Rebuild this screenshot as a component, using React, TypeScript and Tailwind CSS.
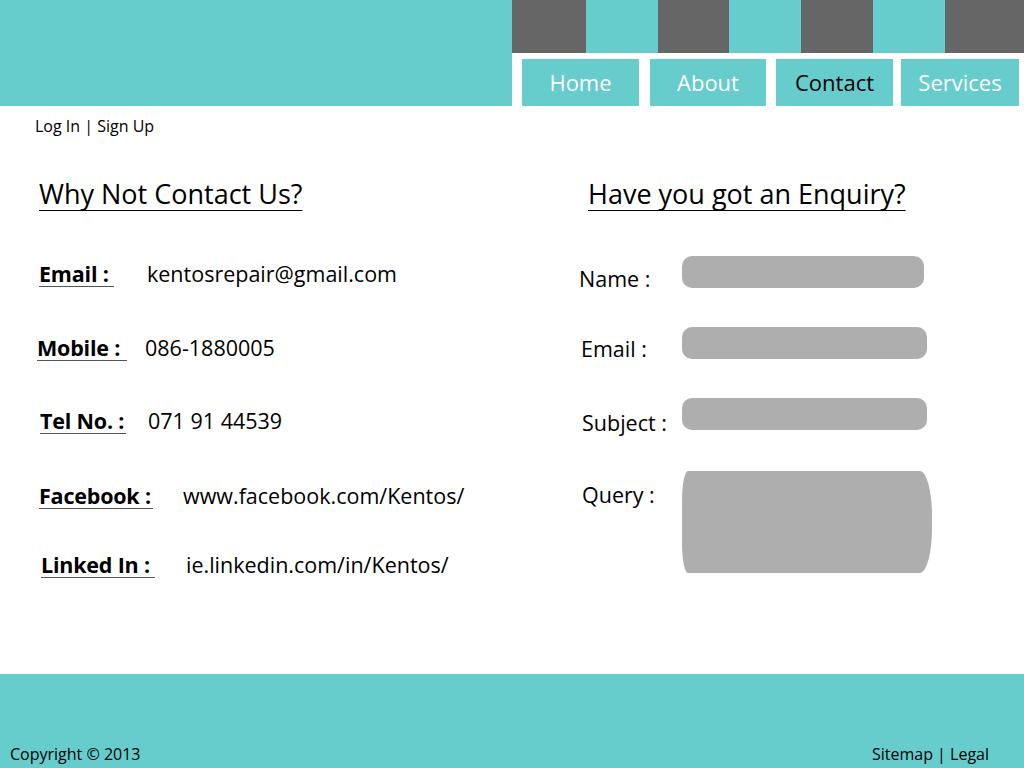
import React from "react";

const teal = "bg-[#66cccc]";

function Header() {
  const blocks = [
    { w: "w-[74px]", c: "bg-[#666666]" },
    { w: "w-[72px]", c: "bg-[#66cccc]" },
    { w: "w-[71px]", c: "bg-[#666666]" },
    { w: "w-[72px]", c: "bg-[#66cccc]" },
    { w: "w-[72px]", c: "bg-[#666666]" },
    { w: "w-[72px]", c: "bg-[#66cccc]" },
    { w: "w-[79px]", c: "bg-[#666666]" },
  ];
  return (
    <div className="flex h-[106px]">
      <div className={`w-[512px] ${teal}`} />
      <div className="flex flex-1 flex-col">
        <div className="flex h-[53px]">
          {blocks.map((b, i) => (
            <div key={i} className={`${b.w} ${b.c} h-full`} />
          ))}
        </div>
        <div className="flex flex-1 bg-white pl-[10px] pt-[6px] text-[22px]">
          <div className="flex w-[117px] items-center justify-center bg-[#66cccc] text-white">Home</div>
          <div className="ml-[11px] flex w-[116px] items-center justify-center bg-[#66cccc] text-white">About</div>
          <div className="ml-[10px] flex w-[117px] items-center justify-center bg-[#66cccc] text-black">Contact</div>
          <div className="ml-[8px] flex w-[118px] items-center justify-center bg-[#66cccc] text-white">Services</div>
        </div>
      </div>
    </div>
  );
}

type Row = { label: string; value: string; pl: string; w: string; ml: string; mt: string };

const rows: Row[] = [
  { label: "Email :", value: "kentosrepair@gmail.com", pl: "pl-[39px]", w: "w-[75px]", ml: "ml-[33px]", mt: "mt-[52px]" },
  { label: "Mobile :", value: "086-1880005", pl: "pl-[37px]", w: "w-[90px]", ml: "ml-[18px]", mt: "mt-[50px]" },
  { label: "Tel No. :", value: "071 91 44539", pl: "pl-[40px]", w: "w-[86px]", ml: "ml-[22px]", mt: "mt-[49px]" },
  { label: "Facebook :", value: "www.facebook.com/Kentos/", pl: "pl-[39px]", w: "w-[114px]", ml: "ml-[30px]", mt: "mt-[51px]" },
  { label: "Linked In :", value: "ie.linkedin.com/in/Kentos/", pl: "pl-[41px]", w: "w-[114px]", ml: "ml-[31px]", mt: "mt-[45px]" },
];

function LeftColumn() {
  return (
    <div className="flex w-[579px] flex-col">
      <div className="pl-[39px]">
        <span className="text-[27px] leading-[32px] underline decoration-1 underline-offset-[6px]">Why Not Contact Us?</span>
      </div>
      {rows.map((r) => (
        <div key={r.label} className={`flex h-[24px] items-start ${r.pl} ${r.mt}`}>
          <span className={`inline-block ${r.w} shrink-0 whitespace-nowrap border-b-[1.5px] border-[#555555] text-[21.5px] font-bold leading-[24px] tracking-[-0.2px]`}>
            {r.label}
          </span>
          <span className={`${r.ml} whitespace-nowrap text-[21.5px] leading-[24px]`}>{r.value}</span>
        </div>
      ))}
    </div>
  );
}

function RightColumn() {
  return (
    <div className="flex flex-1 flex-col">
      <div className="pl-[9px]">
        <span className="text-[27px] leading-[32px] underline decoration-1 underline-offset-[6px]">Have you got an Enquiry?</span>
      </div>
      <div className="mt-[46px] flex h-[32px]">
        <span className="mt-[10.5px] w-[103px] shrink-0 text-[21.5px] leading-[24px]">Name :</span>
        <div className="h-full w-[242px] rounded-[10px] bg-[#aeaeae]" />
      </div>
      <div className="mt-[39px] flex h-[32px]">
        <span className="mt-[10px] w-[103px] shrink-0 pl-[2px] text-[21.5px] leading-[24px]">Email :</span>
        <div className="h-full w-[245px] rounded-[10px] bg-[#aeaeae]" />
      </div>
      <div className="mt-[39px] flex h-[32px]">
        <span className="mt-[12.5px] w-[103px] shrink-0 pl-[3px] text-[21.5px] leading-[24px]">Subject :</span>
        <div className="h-full w-[245px] rounded-[10px] bg-[#aeaeae]" />
      </div>
      <div className="mt-[41px] flex h-[102px]">
        <span className="mt-[12px] w-[103px] shrink-0 pl-[3px] text-[21.5px] leading-[24px]">Query :</span>
        <div className="h-full w-[250px] rounded-[6px_12px_12px_6px/30px_45px_45px_30px] bg-[#aeaeae]" />
      </div>
    </div>
  );
}

export default function App() {
  return (
    <div className="flex h-[768px] w-[1024px] flex-col overflow-hidden bg-white font-['Open_Sans',sans-serif] text-black">
      <Header />
      <div className="mt-[10px] pl-[35px] text-[16px] leading-[20px]">Log In | Sign Up</div>
      <div className="mt-[42px] flex">
        <LeftColumn />
        <RightColumn />
      </div>
      <div className={`mt-auto flex h-[94px] items-end justify-between ${teal} pb-[4px] pl-[10px] pr-[35px] text-[16px] leading-[20px]`}>
        <span>Copyright © 2013</span>
        <span>Sitemap | Legal</span>
      </div>
    </div>
  );
}
